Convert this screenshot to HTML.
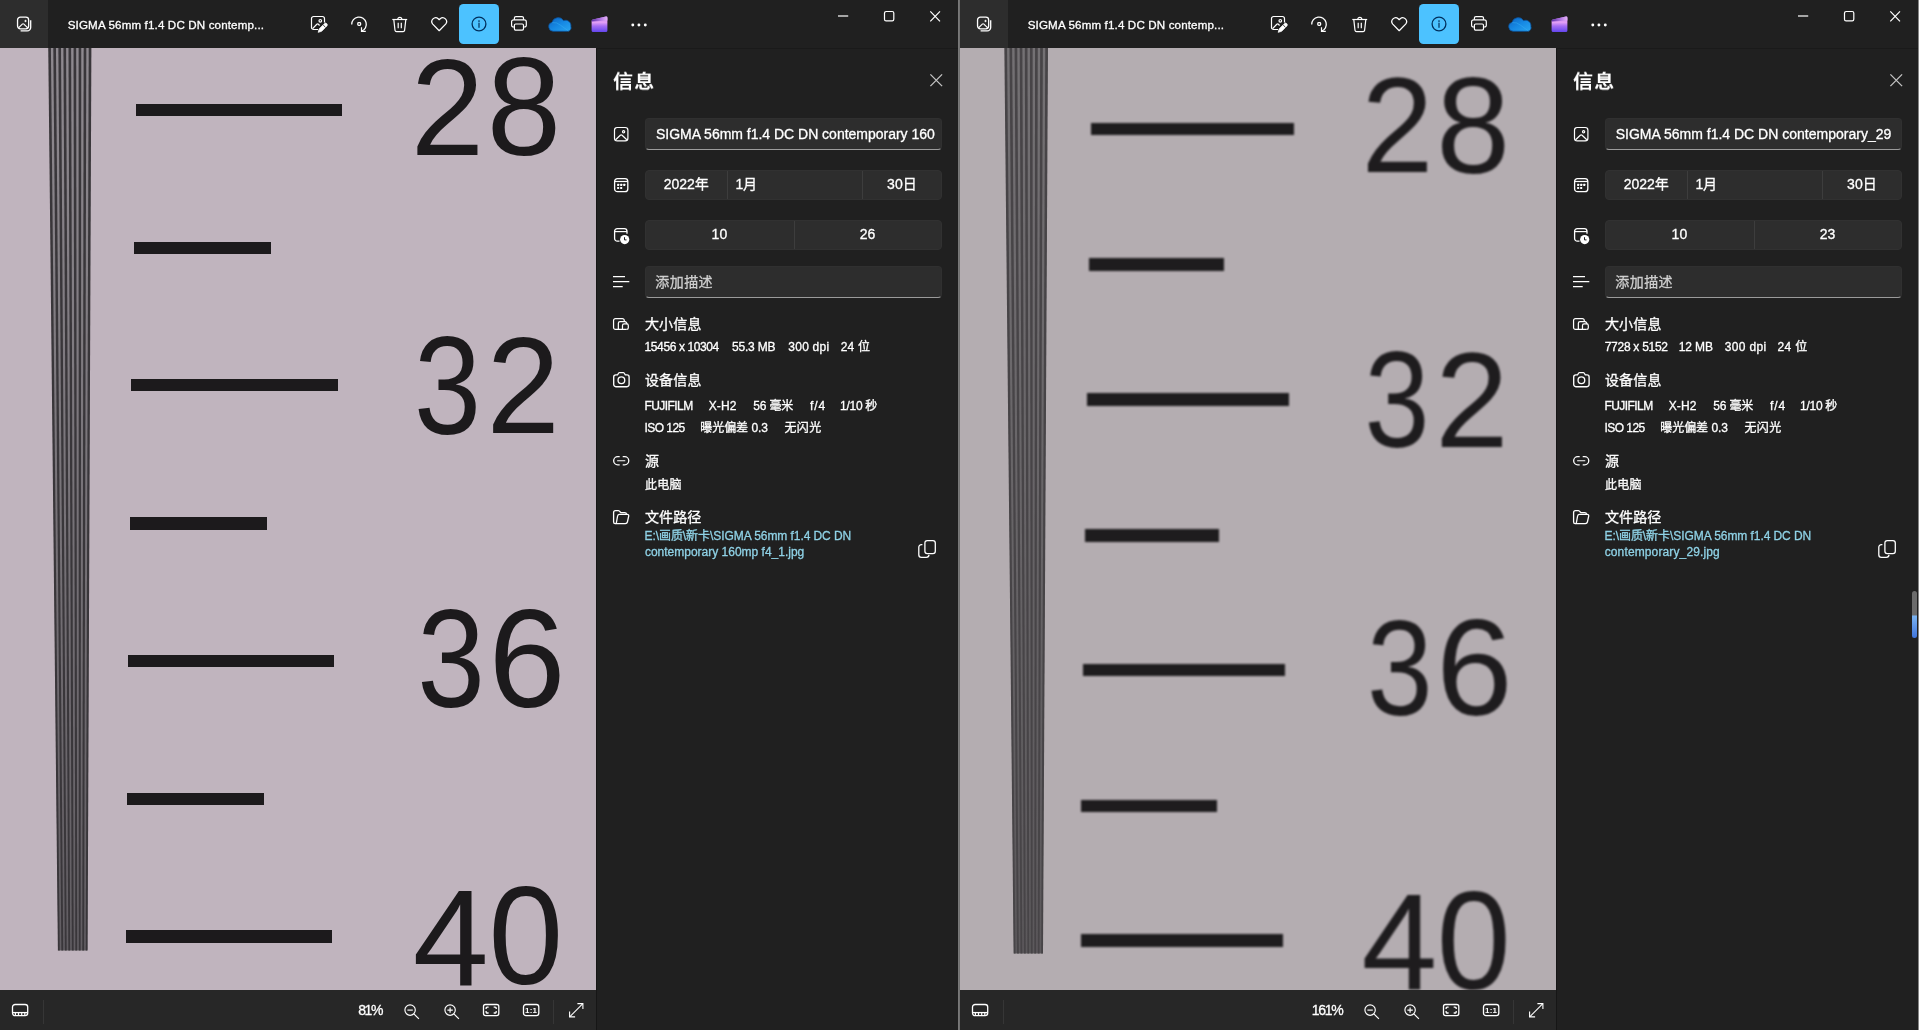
<!DOCTYPE html><html lang="zh-CN"><head><meta charset="utf-8"><title>照片</title><style>
*{box-sizing:border-box}
html,body{margin:0;padding:0}
body{width:1919px;height:1030px;overflow:hidden;background:#202020;position:relative;font-family:"Liberation Sans","Noto Sans CJK SC",sans-serif;color:#fff}
.w{position:absolute;top:0;height:1030px;overflow:hidden;background:#202020}
.ic{position:absolute;overflow:visible;fill:none;stroke:#fff;stroke-width:1.2}
.t{position:absolute;white-space:pre;-webkit-text-stroke:0.3px}
.tx{position:absolute;left:0;top:0;width:0;height:0;will-change:transform}
.tb{position:absolute;left:0;top:0;height:48px;background:#202020}
.appb{position:absolute;left:0;top:0;width:48px;height:48px;background:#2d2d2d}
.act{position:absolute;left:459px;top:4px;width:40px;height:40px;border-radius:4.5px;background:#4cc2ff}
.ph{position:absolute;left:0;top:48px;width:596px;height:942px;overflow:hidden}
.ln{position:absolute}
.dg{position:absolute;white-space:pre;font-family:"Liberation Sans",sans-serif;line-height:1;transform-origin:0 0}
.bb{position:absolute;left:0;top:990px;width:596px;height:40px;background:#272727}
.vd{position:absolute;top:1000px;width:1px;height:24px;background:#363636}
.pn{position:absolute;left:596px;top:48px;height:982px;background:#202020;border-left:1px solid #161616;border-top:1.5px solid #1a1a1a}
.inp{position:absolute;left:645px;width:296.5px;background:#2d2d2d;border-radius:4px;border:1px solid #303030;border-bottom:1.2px solid #9b9b9b}
.box{position:absolute;left:645px;width:296.5px;height:30px;background:#2d2d2d;border-radius:4px;border:1px solid #313131}
.box i{position:absolute;top:0;width:1px;height:28px;background:#3d3d3d}
</style></head><body><svg width="0" height="0" style="position:absolute"><defs><linearGradient id="cg" x1="0" y1="0" x2="1" y2="1"><stop offset="0" stop-color="#0d62c0"/><stop offset="0.5" stop-color="#1689e4"/><stop offset="1" stop-color="#2aa5f0"/></linearGradient><linearGradient id="pg" x1="0" y1="0" x2="0" y2="1"><stop offset="0" stop-color="#b874ec"/><stop offset="0.38" stop-color="#e3a0f6"/><stop offset="0.62" stop-color="#a66ef4"/><stop offset="1" stop-color="#6446ee"/></linearGradient><linearGradient id="pg2" x1="0" y1="0" x2="1" y2="0"><stop offset="0" stop-color="#5b2fa6"/><stop offset="0.6" stop-color="#b57ae6"/><stop offset="1" stop-color="#e6b4f6"/></linearGradient></defs></svg><div class="w" style="left:0;width:958px"><div class="ph" style="background:#c0b4be"><svg class="ic" style="left:0;top:0;filter:blur(0.45px)" width="140" height="942" viewBox="0 0 140 942"><defs><linearGradient id="bg482" x1="0" y1="0" x2="0" y2="1"><stop offset="0" stop-color="#8f8a90"/><stop offset="1" stop-color="#615d62"/></linearGradient></defs><polygon points="48.800000000000004,-4 90.80000000000001,-4 87.19999999999999,902.5 58.3,902.5" fill="url(#bg482)" stroke="none"/><polygon points="48.20,-4 50.87,-4 59.73,902.5 57.90,902.5" fill="#39363a" stroke="none"/><polygon points="53.27,-4 55.93,-4 63.22,902.5 61.38,902.5" fill="#39363a" stroke="none"/><polygon points="58.33,-4 61.00,-4 66.70,902.5 64.87,902.5" fill="#39363a" stroke="none"/><polygon points="63.40,-4 66.07,-4 70.18,902.5 68.35,902.5" fill="#39363a" stroke="none"/><polygon points="68.47,-4 71.13,-4 73.67,902.5 71.83,902.5" fill="#39363a" stroke="none"/><polygon points="73.53,-4 76.20,-4 77.15,902.5 75.32,902.5" fill="#39363a" stroke="none"/><polygon points="78.60,-4 81.27,-4 80.63,902.5 78.80,902.5" fill="#39363a" stroke="none"/><polygon points="83.67,-4 86.33,-4 84.12,902.5 82.28,902.5" fill="#39363a" stroke="none"/><polygon points="88.73,-4 91.40,-4 87.60,902.5 85.77,902.5" fill="#39363a" stroke="none"/></svg><div class="ln" style="left:135.5px;top:55.8px;width:206.2px;height:12.4px;background:#1c1a1c;filter:blur(0.7px)"></div><div class="ln" style="left:133.5px;top:193.5px;width:137.5px;height:12.4px;background:#1c1a1c;filter:blur(0.7px)"></div><div class="ln" style="left:131.4px;top:331.0px;width:206.8px;height:12.4px;background:#1c1a1c;filter:blur(0.7px)"></div><div class="ln" style="left:130px;top:469.2px;width:136.9px;height:12.4px;background:#1c1a1c;filter:blur(0.7px)"></div><div class="ln" style="left:128.2px;top:606.8px;width:206.2px;height:12.4px;background:#1c1a1c;filter:blur(0.7px)"></div><div class="ln" style="left:127px;top:744.5px;width:137.0px;height:12.4px;background:#1c1a1c;filter:blur(0.7px)"></div><div class="ln" style="left:125.7px;top:882.3px;width:206.3px;height:12.4px;background:#1c1a1c;filter:blur(0.7px)"></div><svg class="ic" style="left:0;top:0;filter:blur(0.7px);fill:#1c1a1c;stroke:none" width="596" height="942" viewBox="0 48 596 942" font-family="Liberation Sans, sans-serif" font-size="134" fill="#1c1a1c" stroke="none"><text transform="matrix(0.9836 0 0 1.0214 410.86 154.60)">2</text><text transform="matrix(0.9984 0 0 1.0332 486.86 155.11)">8</text><text transform="matrix(0.8992 0 0 1.0332 413.88 433.81)">3</text><text transform="matrix(0.9836 0 0 1.0289 486.56 433.40)">2</text><text transform="matrix(0.9087 0 0 1.0332 417.33 707.41)">3</text><text transform="matrix(1.0339 0 0 1.0385 488.52 706.80)">6</text><text transform="matrix(1.0193 0 0 1.0233 412.64 984.50)">4</text><text transform="matrix(1.0016 0 0 1.0332 488.54 984.41)">0</text></svg></div><div class="tb" style="width:958px"></div><div class="appb"></div><svg class="ic" style="left:17px;top:17px" width="15" height="15" viewBox="0 0 15 15"><rect x="0.55" y="0.2" width="11.1" height="11.6" rx="2.8" stroke-width="1.3"/><path d="M3.6 13.9H10.2A3.5 3.5 0 0 0 13.7 10.4V3.2" stroke-width="1.3"/><path d="M1.5 10.9L5.3 7.1Q6.1 6.4 6.9 7.1L10.7 10.9" stroke-width="1.2"/><path d="M8.5 2.4L9.1 3.4L10.1 4L9.1 4.6L8.5 5.6L7.9 4.6L6.9 4L7.9 3.4Z" fill="#fff" stroke="none"/></svg><svg class="ic" style="left:311px;top:16px" width="17" height="17" viewBox="0 0 17 17"><path d="M7 13.5H2.6A2.1 2.1 0 0 1 0.5 11.4V2.6A2.1 2.1 0 0 1 2.6 0.5H11.4A2.1 2.1 0 0 1 13.5 2.6V6.5"/><circle cx="9.3" cy="4.8" r="1.3"/><path d="M1.6 12.6L5.8 8.3Q6.6 7.6 7.4 8.3L8.6 9.5"/><path d="M7.2 16.3L8.2 12.9L13.4 7.7A1.6 1.6 0 0 1 15.8 10L10.6 15.3Z" fill="#fff" stroke="#fff" stroke-width="0.8" stroke-linejoin="round"/><path d="M12.2 9L14.4 11.2" stroke="#202020" stroke-width="0.9"/></svg><svg class="ic" style="left:350.5px;top:15.7px" width="17" height="17" viewBox="0 0 17 17"><path d="M0.7 8.6A7.3 7.3 0 1 1 10.6 15.2" stroke-width="1.3"/><path d="M10.5 11.3V15.4H14.8" stroke-width="1.2"/><rect x="6.8" y="6.6" width="2.8" height="2.8" rx="0.8" stroke-width="1.3"/></svg><svg class="ic" style="left:391.5px;top:15.6px" width="16" height="17" viewBox="0 0 16 17"><path d="M0.3 3.5H15.2"/><path d="M5.8 3.3A2 2 0 0 1 9.8 3.3"/><path d="M1.8 3.6L3 14.3A1.6 1.6 0 0 0 4.6 15.6H11A1.6 1.6 0 0 0 12.6 14.3L13.8 3.6"/><path d="M6.2 6.8V12.2M9.3 6.8V12.2"/></svg><svg class="ic" style="left:430.9px;top:16.6px" width="17" height="15" viewBox="0 0 17 15"><path d="M8.2 13.7L1.75 7.1A3.85 3.85 0 0 1 7.2 1.7L8.2 2.7L9.2 1.7A3.85 3.85 0 0 1 14.65 7.1Z" stroke-linejoin="round" stroke-width="1.25"/></svg><div class="act"></div><svg class="ic" style="left:470.5px;top:15.5px" width="16" height="16" viewBox="0 0 16 16"><circle cx="8" cy="8" r="6.9" stroke="#002f5c" stroke-width="1.3"/><circle cx="8" cy="5" r="0.85" fill="#002f5c" stroke="none"/><path d="M8 7.1V11.3" stroke="#002f5c" stroke-width="1.2" stroke-linecap="round"/></svg><svg class="ic" style="left:511px;top:16.4px" width="17" height="16" viewBox="0 0 17 16"><path d="M3.4 3.8V2.1A1.5 1.5 0 0 1 4.9 0.6H11A1.5 1.5 0 0 1 12.5 2.1V3.8" stroke-width="1.2"/><path d="M3.3 11H2.4A1.8 1.8 0 0 1 0.6 9.2V5.8A2 2 0 0 1 2.6 3.8H13.3A2 2 0 0 1 15.3 5.8V9.2A1.8 1.8 0 0 1 13.5 11H12.6" stroke-width="1.2"/><rect x="3.4" y="8" width="9.1" height="6.1" rx="1.3" stroke-width="1.2"/></svg><svg class="ic" style="left:547.5px;top:16px" width="24" height="16" viewBox="0 0 24 16"><path d="M5.2 15.3A4.6 4.6 0 0 1 4 6.3A6.4 6.4 0 0 1 15.6 4.6A5.4 5.4 0 0 1 22.9 10.4A3.6 3.6 0 0 1 19.6 15.3Z" fill="url(#cg)" stroke="#0b4f96" stroke-width="0.8"/><path d="M4.3 6.6Q9 6 12.5 9.2L20.5 15" stroke="#37b0f4" stroke-width="0.8" opacity="0.6"/></svg><svg class="ic" style="left:590.6px;top:15.7px" width="17" height="17" viewBox="0 0 17 17"><path d="M0.6 5.2Q0.6 3.9 1.9 3.6L14.9 0.5Q16.4 0.2 16.4 1.7V14.4Q16.4 15.9 14.9 15.9H2.1Q0.6 15.9 0.6 14.4Z" fill="url(#pg)" stroke="none"/><path d="M0.6 5.6L16.4 4.4V1.7Q16.4 0.2 14.9 0.5L1.9 3.6Q0.6 3.9 0.6 5.2Z" fill="url(#pg2)" stroke="none"/></svg><svg class="ic" style="left:631.2px;top:22.6px" width="16" height="4" viewBox="0 0 16 4"><circle cx="1.8" cy="2" r="1.45" fill="#fff" stroke="none"/><circle cx="7.9" cy="2" r="1.45" fill="#fff" stroke="none"/><circle cx="14.3" cy="2" r="1.45" fill="#fff" stroke="none"/></svg><svg class="ic" style="left:837.9px;top:14.5px" width="11" height="2" viewBox="0 0 11 2"><path d="M0 1H10.2"/></svg><svg class="ic" style="left:883.9px;top:10.9px" width="11" height="11" viewBox="0 0 11 11"><rect x="0.5" y="0.5" width="9.3" height="9.3" rx="1.6"/></svg><svg class="ic" style="left:929.9px;top:10.6px" width="11" height="11" viewBox="0 0 11 11"><path d="M0.3 0.3L10 10.3M10 0.3L0.3 10.3"/></svg><div class="bb"></div><div class="vd" style="left:42.5px"></div><div class="vd" style="left:553.3px"></div><svg class="ic" style="left:11.9px;top:1004px" width="17" height="13" viewBox="0 0 17 13"><rect x="0.5" y="0.5" width="15.2" height="11.2" rx="2.6" stroke-width="1.3"/><path d="M0.6 8.6H15.6" stroke-width="1.3"/><path d="M3.4 8.6V11.6M6.5 8.6V11.6M9.7 8.6V11.6M12.8 8.6V11.6" stroke-width="1.2"/></svg><svg class="ic" style="left:403.8px;top:1004px" width="16" height="16" viewBox="0 0 16 16"><circle cx="6.1" cy="6.1" r="5.2" stroke-width="1.15"/><path d="M3.4 6.1H8.8" stroke-width="1.15"/><path d="M9.9 9.9L14.9 14.9" stroke-width="1.15"/></svg><svg class="ic" style="left:443.9px;top:1004px" width="16" height="16" viewBox="0 0 16 16"><circle cx="6.1" cy="6.1" r="5.2" stroke-width="1.15"/><path d="M3.4 6.1H8.8M6.1 3.4V8.8" stroke-width="1.15"/><path d="M9.9 9.9L14.9 14.9" stroke-width="1.15"/></svg><svg class="ic" style="left:483px;top:1004px" width="17" height="13" viewBox="0 0 17 13"><rect x="0.5" y="0.5" width="15.3" height="11.1" rx="2" stroke-width="1.3"/><path d="M3.1 5V4.2A1.1 1.1 0 0 1 4.2 3.1H5.6M10.7 3.1H12.1A1.1 1.1 0 0 1 13.2 4.2V5M13.2 7.1V7.9A1.1 1.1 0 0 1 12.1 9H10.7M5.6 9H4.2A1.1 1.1 0 0 1 3.1 7.9V7.1" stroke-width="1.3"/></svg><svg class="ic" style="left:523.1px;top:1004px;will-change:transform" width="17" height="13" viewBox="0 0 17 13"><rect x="0.5" y="0.5" width="15.3" height="11.1" rx="2.4" stroke-width="1.3"/><text x="8.15" y="9.1" font-family="Liberation Sans, sans-serif" font-size="8" font-weight="700" fill="#fff" stroke="none" text-anchor="middle" letter-spacing="0.2">1:1</text></svg><svg class="ic" style="left:568.7px;top:1002.9px" width="15" height="15" viewBox="0 0 15 15"><path d="M0.9 13.6L13.6 0.9" stroke-width="1.1"/><path d="M8.4 0.6H13.9V6.1M0.6 8.4V13.9H6.1" stroke-width="1.1"/></svg><div class="pn" style="width:362px"></div><div class="inp" style="top:118px;height:32px"></div><div class="box" style="top:170px"><i style="left:81px"></i><i style="left:216px"></i></div><div class="box" style="top:220px"><i style="left:148px"></i></div><div class="inp" style="top:266px;height:32px"></div><svg class="ic" style="left:929.7px;top:73.5px" width="13" height="13" viewBox="0 0 13 13"><path d="M0.4 0.4L12.1 12.1M12.1 0.4L0.4 12.1" stroke="#c4c4c4" stroke-width="1.3"/></svg><svg class="ic" style="left:613.7px;top:126.8px" width="15" height="15" viewBox="0 0 15 15"><rect x="0.5" y="0.5" width="13.4" height="13.4" rx="2.7"/><path d="M1.6 12.8L6.3 8.2Q7.2 7.5 8.1 8.2L12.8 12.8"/><circle cx="9.6" cy="4.7" r="1.1"/></svg><svg class="ic" style="left:613.7px;top:177.7px" width="15" height="15" viewBox="0 0 15 15"><rect x="0.6" y="0.6" width="13.2" height="13.1" rx="2.8" stroke-width="1.3"/><path d="M0.6 3.5H13.8" stroke-width="1.2"/><g fill="#fff" stroke="none"><rect x="3.1" y="5.8" width="2.1" height="2.1" rx="0.4"/><rect x="6.15" y="5.8" width="2.1" height="2.1" rx="0.4"/><rect x="9.2" y="5.8" width="2.1" height="2.1" rx="0.4"/><rect x="3.1" y="8.9" width="2.1" height="2.1" rx="0.4"/><rect x="6.15" y="8.9" width="2.1" height="2.1" rx="0.4"/></g></svg><svg class="ic" style="left:613.7px;top:227.7px" width="16" height="17" viewBox="0 0 16 17"><path d="M5.5 13.2H3.3A2.7 2.7 0 0 1 0.6 10.5V3.3A2.7 2.7 0 0 1 3.3 0.6H10.3A2.7 2.7 0 0 1 13 3.3V5.8" stroke-width="1.3"/><path d="M0.6 3.6H13" stroke-width="1.2"/><circle cx="10.7" cy="11.6" r="4.6" fill="#fff" stroke="none"/><path d="M10.5 9.2V11.9H12.5" stroke="#202020" stroke-width="1"/></svg><svg class="ic" style="left:612.7px;top:275.9px" width="17" height="12" viewBox="0 0 17 12"><path d="M0 0.6H12M0 5.6H16.3M0 10.6H9.7" stroke-width="1.1"/></svg><svg class="ic" style="left:612.7px;top:318.2px" width="15.98" height="12.22" viewBox="0 0 17 13"><path d="M12 3.6V2.6A2 2 0 0 0 10 0.6H2.6A2 2 0 0 0 0.6 2.6V10.2A2 2 0 0 0 2.6 12.2H14.6" stroke-width="1.3"/><path d="M5.7 12.2V5.7A1.8 1.8 0 0 1 7.5 3.9H12.6Q13.7 3.9 14.3 4.9L15.1 6.3" stroke-width="1.3"/><path d="M10.1 12.2V8A1.8 1.8 0 0 1 11.9 6.2H14.6A1.7 1.7 0 0 1 16.3 7.9V10.5A1.7 1.7 0 0 1 14.6 12.2" stroke-width="1.3"/></svg><svg class="ic" style="left:612.6px;top:371.9px" width="17" height="16" viewBox="0 0 17 16"><path d="M2.8 2.8H4.5L5.7 1Q6 0.55 6.5 0.55H10.3Q10.8 0.55 11.1 1L12.3 2.8H14A2.1 2.1 0 0 1 16.1 4.9V12.6A2.1 2.1 0 0 1 14 14.7H2.8A2.1 2.1 0 0 1 0.7 12.6V4.9A2.1 2.1 0 0 1 2.8 2.8Z" stroke-width="1.35"/><circle cx="8.4" cy="8.2" r="3.35" stroke-width="1.35"/></svg><svg class="ic" style="left:612.6px;top:455.75px" width="17" height="11" viewBox="0 0 17 11"><path d="M6.7 0.65H4.75A4.1 4.1 0 0 0 4.75 8.85H6.7" stroke-width="1.3"/><path d="M9.7 0.65H11.65A4.1 4.1 0 0 1 11.65 8.85H9.7" stroke-width="1.3"/><path d="M4.6 4.75H11.8" stroke-width="1.2" stroke-linecap="round"/></svg><svg class="ic" style="left:612.6px;top:509.7px" width="17" height="15" viewBox="0 0 17 15"><path d="M2.2 13.6A1.7 1.7 0 0 1 0.6 11.9V2.5A1.9 1.9 0 0 1 2.5 0.6H5.2Q5.9 0.6 6.4 1.1L7.5 2.2Q7.9 2.6 8.5 2.6H11.7A1.9 1.9 0 0 1 13.6 4.3" stroke-width="1.3"/><path d="M2.2 13.6Q3.1 13.6 3.4 12.6L4.6 6Q4.9 4.4 6.5 4.4H14.3A1.4 1.4 0 0 1 15.7 6.2L14.4 12Q14 13.6 12.3 13.6Z" stroke-width="1.3" stroke-linejoin="round"/></svg><svg class="ic" style="left:917.7px;top:539.6px" width="19" height="19" viewBox="0 0 19 19"><rect x="6.9" y="0.7" width="10.4" height="12.9" rx="2.4" stroke-width="1.3"/><path d="M4.4 4.6H3.4A2.6 2.6 0 0 0 0.8 7.2V14.7A2.6 2.6 0 0 0 3.4 17.3H8.4A2.6 2.6 0 0 0 11 14.9" stroke-width="1.3"/></svg><div class="tx"><div class="t" style="left:67.7px;top:15.4px;font-size:11.6px;line-height:20px;letter-spacing:0.14px">SIGMA 56mm f1.4 DC DN contemp...</div><div class="t" style="left:613.02px;top:68.4px;font-size:20px;line-height:28px;font-weight:700;letter-spacing:1.23px;-webkit-text-stroke:0px;transform:scaleY(0.94)">信息</div><div class="t" style="left:655.98px;top:124.0px;font-size:14px;line-height:20px;letter-spacing:-0.015px">SIGMA 56mm f1.4 DC DN contemporary 160</div><div class="t" style="left:663.67px;top:173.9px;font-size:14px;line-height:20px;letter-spacing:0.003px">2022年</div><div class="t" style="left:735.6px;top:173.9px;font-size:14px;line-height:20px;letter-spacing:-0.486px">1月</div><div class="t" style="left:887.1px;top:173.9px;font-size:14px;line-height:20px;letter-spacing:0.089px">30日</div><div class="t" style="left:659.4px;width:120px;text-align:center;top:224.4px;font-size:14px;line-height:20px">10</div><div class="t" style="left:807.6px;width:120px;text-align:center;top:224.4px;font-size:14px;line-height:20px">26</div><div class="t" style="left:655.3px;top:272.0px;font-size:14px;line-height:20px;color:#cfcfcf;letter-spacing:0.433px">添加描述</div><div class="t" style="left:644.9px;top:314.0px;font-size:14px;line-height:20px;letter-spacing:0.217px">大小信息</div><div class="t" style="left:644.52px;top:337.0px;font-size:12px;line-height:20px;letter-spacing:-0.386px">15456 x 10304</div><div class="t" style="left:731.92px;top:337.0px;font-size:12px;line-height:20px;letter-spacing:-0.163px">55.3 MB</div><div class="t" style="left:788.33px;top:337.0px;font-size:12px;line-height:20px;letter-spacing:0.232px">300 dpi</div><div class="t" style="left:840.7px;top:337.0px;font-size:12px;line-height:20px;letter-spacing:0.206px">24 位</div><div class="t" style="left:644.9px;top:370.0px;font-size:14px;line-height:20px;letter-spacing:0.217px">设备信息</div><div class="t" style="left:644.52px;top:395.8px;font-size:12px;line-height:20px;letter-spacing:-0.573px">FUJIFILM</div><div class="t" style="left:708.65px;top:395.8px;font-size:12px;line-height:20px;letter-spacing:0.12px">X-H2</div><div class="t" style="left:753.23px;top:395.8px;font-size:12px;line-height:20px;letter-spacing:-0.134px">56 毫米</div><div class="t" style="left:809.88px;top:395.8px;font-size:12px;line-height:20px;letter-spacing:1.039px">f/4</div><div class="t" style="left:840.12px;top:395.8px;font-size:12px;line-height:20px;letter-spacing:-0.302px">1/10 秒</div><div class="t" style="left:644.4px;top:417.7px;font-size:12px;line-height:20px;letter-spacing:-0.534px">ISO 125</div><div class="t" style="left:700.23px;top:417.7px;font-size:12px;line-height:20px;letter-spacing:-0.032px">曝光偏差 0.3</div><div class="t" style="left:784.42px;top:417.7px;font-size:12px;line-height:20px;letter-spacing:0.428px">无闪光</div><div class="t" style="left:644.9px;top:451.0px;font-size:14px;line-height:20px">源</div><div class="t" style="left:644.9px;top:474.6px;font-size:12px;line-height:20px;letter-spacing:0.363px">此电脑</div><div class="t" style="left:644.9px;top:507.4px;font-size:14px;line-height:20px;letter-spacing:0.133px">文件路径</div><div class="t" style="left:644.52px;top:526.2px;font-size:12px;line-height:20px;color:#8fd2e6;letter-spacing:-0.068px">E:\画质\新卡\SIGMA 56mm f1.4 DC DN</div><div class="t" style="left:644.9px;top:542.2px;font-size:12px;line-height:20px;color:#8fd2e6;letter-spacing:-0.002px">contemporary 160mp f4_1.jpg</div><div class="t" style="left:358.3px;top:1000.2px;font-size:14px;line-height:20px;letter-spacing:-1.486px">81%</div></div></div><div style="position:absolute;left:958px;top:0;width:2px;height:1030px;background:linear-gradient(90deg,#7c7c7c,#6c6c6c)"></div><div class="w" style="left:960px;width:959px"><div class="ph" style="background:#b4adb1"><svg class="ic" style="left:0;top:0;filter:blur(0.7px)" width="140" height="942" viewBox="0 0 140 942"><defs><linearGradient id="bg443" x1="0" y1="0" x2="0" y2="1"><stop offset="0" stop-color="#747174"/><stop offset="1" stop-color="#5c595c"/></linearGradient></defs><polygon points="44.9,-4 87.4,-4 82.6,905.4 54.0,905.4" fill="url(#bg443)" stroke="none"/><polygon points="44.30,-4 47.00,-4 55.42,905.4 53.60,905.4" fill="#474447" stroke="none"/><polygon points="49.43,-4 52.12,-4 58.86,905.4 57.05,905.4" fill="#474447" stroke="none"/><polygon points="54.55,-4 57.25,-4 62.31,905.4 60.50,905.4" fill="#474447" stroke="none"/><polygon points="59.68,-4 62.37,-4 65.76,905.4 63.94,905.4" fill="#474447" stroke="none"/><polygon points="64.80,-4 67.50,-4 69.21,905.4 67.39,905.4" fill="#474447" stroke="none"/><polygon points="69.93,-4 72.62,-4 72.66,905.4 70.84,905.4" fill="#474447" stroke="none"/><polygon points="75.05,-4 77.75,-4 76.10,905.4 74.29,905.4" fill="#474447" stroke="none"/><polygon points="80.18,-4 82.87,-4 79.55,905.4 77.74,905.4" fill="#474447" stroke="none"/><polygon points="85.30,-4 88.00,-4 83.00,905.4 81.18,905.4" fill="#474447" stroke="none"/></svg><div class="ln" style="left:131.2px;top:74.5px;width:202.6px;height:12.6px;background:#1e1c1e;filter:blur(1.1px)"></div><div class="ln" style="left:129px;top:210.2px;width:134.7px;height:12.6px;background:#1e1c1e;filter:blur(1.1px)"></div><div class="ln" style="left:126.8px;top:345.1px;width:202.4px;height:12.6px;background:#1e1c1e;filter:blur(1.1px)"></div><div class="ln" style="left:124.8px;top:481.0px;width:134.5px;height:12.6px;background:#1e1c1e;filter:blur(1.1px)"></div><div class="ln" style="left:123.3px;top:615.9px;width:201.8px;height:12.6px;background:#1e1c1e;filter:blur(1.1px)"></div><div class="ln" style="left:121.3px;top:751.7px;width:135.3px;height:12.6px;background:#1e1c1e;filter:blur(1.1px)"></div><div class="ln" style="left:120.5px;top:886.2px;width:202.4px;height:12.6px;background:#1e1c1e;filter:blur(1.1px)"></div><svg class="ic" style="left:0;top:0;filter:blur(1.1px);fill:#1e1c1e;stroke:none" width="596" height="942" viewBox="0 48 596 942" font-family="Liberation Sans, sans-serif" font-size="134" fill="#1e1c1e" stroke="none"><text transform="matrix(0.9639 0 0 1.0086 401.59 172.00)">2</text><text transform="matrix(0.9905 0 0 1.0206 476.30 172.52)">8</text><text transform="matrix(0.8724 0 0 1.0206 404.62 447.12)">3</text><text transform="matrix(0.9836 0 0 1.0150 475.36 446.60)">2</text><text transform="matrix(0.8803 0 0 1.0153 406.98 715.13)">3</text><text transform="matrix(1.0242 0 0 1.0206 476.29 714.52)">6</text><text transform="matrix(1.0178 0 0 1.0233 401.55 989.00)">4</text><text transform="matrix(0.9922 0 0 1.0343 476.79 988.91)">0</text></svg></div><div class="tb" style="width:959px"></div><div class="appb"></div><svg class="ic" style="left:17px;top:17px" width="15" height="15" viewBox="0 0 15 15"><rect x="0.55" y="0.2" width="11.1" height="11.6" rx="2.8" stroke-width="1.3"/><path d="M3.6 13.9H10.2A3.5 3.5 0 0 0 13.7 10.4V3.2" stroke-width="1.3"/><path d="M1.5 10.9L5.3 7.1Q6.1 6.4 6.9 7.1L10.7 10.9" stroke-width="1.2"/><path d="M8.5 2.4L9.1 3.4L10.1 4L9.1 4.6L8.5 5.6L7.9 4.6L6.9 4L7.9 3.4Z" fill="#fff" stroke="none"/></svg><svg class="ic" style="left:311px;top:16px" width="17" height="17" viewBox="0 0 17 17"><path d="M7 13.5H2.6A2.1 2.1 0 0 1 0.5 11.4V2.6A2.1 2.1 0 0 1 2.6 0.5H11.4A2.1 2.1 0 0 1 13.5 2.6V6.5"/><circle cx="9.3" cy="4.8" r="1.3"/><path d="M1.6 12.6L5.8 8.3Q6.6 7.6 7.4 8.3L8.6 9.5"/><path d="M7.2 16.3L8.2 12.9L13.4 7.7A1.6 1.6 0 0 1 15.8 10L10.6 15.3Z" fill="#fff" stroke="#fff" stroke-width="0.8" stroke-linejoin="round"/><path d="M12.2 9L14.4 11.2" stroke="#202020" stroke-width="0.9"/></svg><svg class="ic" style="left:350.5px;top:15.7px" width="17" height="17" viewBox="0 0 17 17"><path d="M0.7 8.6A7.3 7.3 0 1 1 10.6 15.2" stroke-width="1.3"/><path d="M10.5 11.3V15.4H14.8" stroke-width="1.2"/><rect x="6.8" y="6.6" width="2.8" height="2.8" rx="0.8" stroke-width="1.3"/></svg><svg class="ic" style="left:391.5px;top:15.6px" width="16" height="17" viewBox="0 0 16 17"><path d="M0.3 3.5H15.2"/><path d="M5.8 3.3A2 2 0 0 1 9.8 3.3"/><path d="M1.8 3.6L3 14.3A1.6 1.6 0 0 0 4.6 15.6H11A1.6 1.6 0 0 0 12.6 14.3L13.8 3.6"/><path d="M6.2 6.8V12.2M9.3 6.8V12.2"/></svg><svg class="ic" style="left:430.9px;top:16.6px" width="17" height="15" viewBox="0 0 17 15"><path d="M8.2 13.7L1.75 7.1A3.85 3.85 0 0 1 7.2 1.7L8.2 2.7L9.2 1.7A3.85 3.85 0 0 1 14.65 7.1Z" stroke-linejoin="round" stroke-width="1.25"/></svg><div class="act"></div><svg class="ic" style="left:470.5px;top:15.5px" width="16" height="16" viewBox="0 0 16 16"><circle cx="8" cy="8" r="6.9" stroke="#002f5c" stroke-width="1.3"/><circle cx="8" cy="5" r="0.85" fill="#002f5c" stroke="none"/><path d="M8 7.1V11.3" stroke="#002f5c" stroke-width="1.2" stroke-linecap="round"/></svg><svg class="ic" style="left:511px;top:16.4px" width="17" height="16" viewBox="0 0 17 16"><path d="M3.4 3.8V2.1A1.5 1.5 0 0 1 4.9 0.6H11A1.5 1.5 0 0 1 12.5 2.1V3.8" stroke-width="1.2"/><path d="M3.3 11H2.4A1.8 1.8 0 0 1 0.6 9.2V5.8A2 2 0 0 1 2.6 3.8H13.3A2 2 0 0 1 15.3 5.8V9.2A1.8 1.8 0 0 1 13.5 11H12.6" stroke-width="1.2"/><rect x="3.4" y="8" width="9.1" height="6.1" rx="1.3" stroke-width="1.2"/></svg><svg class="ic" style="left:547.5px;top:16px" width="24" height="16" viewBox="0 0 24 16"><path d="M5.2 15.3A4.6 4.6 0 0 1 4 6.3A6.4 6.4 0 0 1 15.6 4.6A5.4 5.4 0 0 1 22.9 10.4A3.6 3.6 0 0 1 19.6 15.3Z" fill="url(#cg)" stroke="#0b4f96" stroke-width="0.8"/><path d="M4.3 6.6Q9 6 12.5 9.2L20.5 15" stroke="#37b0f4" stroke-width="0.8" opacity="0.6"/></svg><svg class="ic" style="left:590.6px;top:15.7px" width="17" height="17" viewBox="0 0 17 17"><path d="M0.6 5.2Q0.6 3.9 1.9 3.6L14.9 0.5Q16.4 0.2 16.4 1.7V14.4Q16.4 15.9 14.9 15.9H2.1Q0.6 15.9 0.6 14.4Z" fill="url(#pg)" stroke="none"/><path d="M0.6 5.6L16.4 4.4V1.7Q16.4 0.2 14.9 0.5L1.9 3.6Q0.6 3.9 0.6 5.2Z" fill="url(#pg2)" stroke="none"/></svg><svg class="ic" style="left:631.2px;top:22.6px" width="16" height="4" viewBox="0 0 16 4"><circle cx="1.8" cy="2" r="1.45" fill="#fff" stroke="none"/><circle cx="7.9" cy="2" r="1.45" fill="#fff" stroke="none"/><circle cx="14.3" cy="2" r="1.45" fill="#fff" stroke="none"/></svg><svg class="ic" style="left:837.9px;top:14.5px" width="11" height="2" viewBox="0 0 11 2"><path d="M0 1H10.2"/></svg><svg class="ic" style="left:883.9px;top:10.9px" width="11" height="11" viewBox="0 0 11 11"><rect x="0.5" y="0.5" width="9.3" height="9.3" rx="1.6"/></svg><svg class="ic" style="left:929.9px;top:10.6px" width="11" height="11" viewBox="0 0 11 11"><path d="M0.3 0.3L10 10.3M10 0.3L0.3 10.3"/></svg><div class="bb"></div><div class="vd" style="left:42.5px"></div><div class="vd" style="left:553.3px"></div><svg class="ic" style="left:11.9px;top:1004px" width="17" height="13" viewBox="0 0 17 13"><rect x="0.5" y="0.5" width="15.2" height="11.2" rx="2.6" stroke-width="1.3"/><path d="M0.6 8.6H15.6" stroke-width="1.3"/><path d="M3.4 8.6V11.6M6.5 8.6V11.6M9.7 8.6V11.6M12.8 8.6V11.6" stroke-width="1.2"/></svg><svg class="ic" style="left:403.8px;top:1004px" width="16" height="16" viewBox="0 0 16 16"><circle cx="6.1" cy="6.1" r="5.2" stroke-width="1.15"/><path d="M3.4 6.1H8.8" stroke-width="1.15"/><path d="M9.9 9.9L14.9 14.9" stroke-width="1.15"/></svg><svg class="ic" style="left:443.9px;top:1004px" width="16" height="16" viewBox="0 0 16 16"><circle cx="6.1" cy="6.1" r="5.2" stroke-width="1.15"/><path d="M3.4 6.1H8.8M6.1 3.4V8.8" stroke-width="1.15"/><path d="M9.9 9.9L14.9 14.9" stroke-width="1.15"/></svg><svg class="ic" style="left:483px;top:1004px" width="17" height="13" viewBox="0 0 17 13"><rect x="0.5" y="0.5" width="15.3" height="11.1" rx="2" stroke-width="1.3"/><path d="M3.1 5V4.2A1.1 1.1 0 0 1 4.2 3.1H5.6M10.7 3.1H12.1A1.1 1.1 0 0 1 13.2 4.2V5M13.2 7.1V7.9A1.1 1.1 0 0 1 12.1 9H10.7M5.6 9H4.2A1.1 1.1 0 0 1 3.1 7.9V7.1" stroke-width="1.3"/></svg><svg class="ic" style="left:523.1px;top:1004px;will-change:transform" width="17" height="13" viewBox="0 0 17 13"><rect x="0.5" y="0.5" width="15.3" height="11.1" rx="2.4" stroke-width="1.3"/><text x="8.15" y="9.1" font-family="Liberation Sans, sans-serif" font-size="8" font-weight="700" fill="#fff" stroke="none" text-anchor="middle" letter-spacing="0.2">1:1</text></svg><svg class="ic" style="left:568.7px;top:1002.9px" width="15" height="15" viewBox="0 0 15 15"><path d="M0.9 13.6L13.6 0.9" stroke-width="1.1"/><path d="M8.4 0.6H13.9V6.1M0.6 8.4V13.9H6.1" stroke-width="1.1"/></svg><div class="pn" style="width:363px"></div><div class="inp" style="top:118px;height:32px"></div><div class="box" style="top:170px"><i style="left:81px"></i><i style="left:216px"></i></div><div class="box" style="top:220px"><i style="left:148px"></i></div><div class="inp" style="top:266px;height:32px"></div><svg class="ic" style="left:929.7px;top:73.5px" width="13" height="13" viewBox="0 0 13 13"><path d="M0.4 0.4L12.1 12.1M12.1 0.4L0.4 12.1" stroke="#c4c4c4" stroke-width="1.3"/></svg><svg class="ic" style="left:613.7px;top:126.8px" width="15" height="15" viewBox="0 0 15 15"><rect x="0.5" y="0.5" width="13.4" height="13.4" rx="2.7"/><path d="M1.6 12.8L6.3 8.2Q7.2 7.5 8.1 8.2L12.8 12.8"/><circle cx="9.6" cy="4.7" r="1.1"/></svg><svg class="ic" style="left:613.7px;top:177.7px" width="15" height="15" viewBox="0 0 15 15"><rect x="0.6" y="0.6" width="13.2" height="13.1" rx="2.8" stroke-width="1.3"/><path d="M0.6 3.5H13.8" stroke-width="1.2"/><g fill="#fff" stroke="none"><rect x="3.1" y="5.8" width="2.1" height="2.1" rx="0.4"/><rect x="6.15" y="5.8" width="2.1" height="2.1" rx="0.4"/><rect x="9.2" y="5.8" width="2.1" height="2.1" rx="0.4"/><rect x="3.1" y="8.9" width="2.1" height="2.1" rx="0.4"/><rect x="6.15" y="8.9" width="2.1" height="2.1" rx="0.4"/></g></svg><svg class="ic" style="left:613.7px;top:227.7px" width="16" height="17" viewBox="0 0 16 17"><path d="M5.5 13.2H3.3A2.7 2.7 0 0 1 0.6 10.5V3.3A2.7 2.7 0 0 1 3.3 0.6H10.3A2.7 2.7 0 0 1 13 3.3V5.8" stroke-width="1.3"/><path d="M0.6 3.6H13" stroke-width="1.2"/><circle cx="10.7" cy="11.6" r="4.6" fill="#fff" stroke="none"/><path d="M10.5 9.2V11.9H12.5" stroke="#202020" stroke-width="1"/></svg><svg class="ic" style="left:612.7px;top:275.9px" width="17" height="12" viewBox="0 0 17 12"><path d="M0 0.6H12M0 5.6H16.3M0 10.6H9.7" stroke-width="1.1"/></svg><svg class="ic" style="left:612.7px;top:318.2px" width="15.98" height="12.22" viewBox="0 0 17 13"><path d="M12 3.6V2.6A2 2 0 0 0 10 0.6H2.6A2 2 0 0 0 0.6 2.6V10.2A2 2 0 0 0 2.6 12.2H14.6" stroke-width="1.3"/><path d="M5.7 12.2V5.7A1.8 1.8 0 0 1 7.5 3.9H12.6Q13.7 3.9 14.3 4.9L15.1 6.3" stroke-width="1.3"/><path d="M10.1 12.2V8A1.8 1.8 0 0 1 11.9 6.2H14.6A1.7 1.7 0 0 1 16.3 7.9V10.5A1.7 1.7 0 0 1 14.6 12.2" stroke-width="1.3"/></svg><svg class="ic" style="left:612.6px;top:371.9px" width="17" height="16" viewBox="0 0 17 16"><path d="M2.8 2.8H4.5L5.7 1Q6 0.55 6.5 0.55H10.3Q10.8 0.55 11.1 1L12.3 2.8H14A2.1 2.1 0 0 1 16.1 4.9V12.6A2.1 2.1 0 0 1 14 14.7H2.8A2.1 2.1 0 0 1 0.7 12.6V4.9A2.1 2.1 0 0 1 2.8 2.8Z" stroke-width="1.35"/><circle cx="8.4" cy="8.2" r="3.35" stroke-width="1.35"/></svg><svg class="ic" style="left:612.6px;top:455.75px" width="17" height="11" viewBox="0 0 17 11"><path d="M6.7 0.65H4.75A4.1 4.1 0 0 0 4.75 8.85H6.7" stroke-width="1.3"/><path d="M9.7 0.65H11.65A4.1 4.1 0 0 1 11.65 8.85H9.7" stroke-width="1.3"/><path d="M4.6 4.75H11.8" stroke-width="1.2" stroke-linecap="round"/></svg><svg class="ic" style="left:612.6px;top:509.7px" width="17" height="15" viewBox="0 0 17 15"><path d="M2.2 13.6A1.7 1.7 0 0 1 0.6 11.9V2.5A1.9 1.9 0 0 1 2.5 0.6H5.2Q5.9 0.6 6.4 1.1L7.5 2.2Q7.9 2.6 8.5 2.6H11.7A1.9 1.9 0 0 1 13.6 4.3" stroke-width="1.3"/><path d="M2.2 13.6Q3.1 13.6 3.4 12.6L4.6 6Q4.9 4.4 6.5 4.4H14.3A1.4 1.4 0 0 1 15.7 6.2L14.4 12Q14 13.6 12.3 13.6Z" stroke-width="1.3" stroke-linejoin="round"/></svg><svg class="ic" style="left:917.7px;top:539.6px" width="19" height="19" viewBox="0 0 19 19"><rect x="6.9" y="0.7" width="10.4" height="12.9" rx="2.4" stroke-width="1.3"/><path d="M4.4 4.6H3.4A2.6 2.6 0 0 0 0.8 7.2V14.7A2.6 2.6 0 0 0 3.4 17.3H8.4A2.6 2.6 0 0 0 11 14.9" stroke-width="1.3"/></svg><div class="tx"><div class="t" style="left:67.7px;top:15.4px;font-size:11.6px;line-height:20px;letter-spacing:0.14px">SIGMA 56mm f1.4 DC DN contemp...</div><div class="t" style="left:613.02px;top:68.4px;font-size:20px;line-height:28px;font-weight:700;letter-spacing:1.23px;-webkit-text-stroke:0px;transform:scaleY(0.94)">信息</div><div class="t" style="left:655.67px;top:124.0px;font-size:14px;line-height:20px;letter-spacing:0.005px">SIGMA 56mm f1.4 DC DN contemporary_29</div><div class="t" style="left:663.67px;top:173.9px;font-size:14px;line-height:20px;letter-spacing:0.003px">2022年</div><div class="t" style="left:735.6px;top:173.9px;font-size:14px;line-height:20px;letter-spacing:-0.486px">1月</div><div class="t" style="left:887.1px;top:173.9px;font-size:14px;line-height:20px;letter-spacing:0.089px">30日</div><div class="t" style="left:659.4px;width:120px;text-align:center;top:224.4px;font-size:14px;line-height:20px">10</div><div class="t" style="left:807.6px;width:120px;text-align:center;top:224.4px;font-size:14px;line-height:20px">23</div><div class="t" style="left:655.3px;top:272.0px;font-size:14px;line-height:20px;color:#cfcfcf;letter-spacing:0.433px">添加描述</div><div class="t" style="left:644.9px;top:314.0px;font-size:14px;line-height:20px;letter-spacing:0.217px">大小信息</div><div class="t" style="left:644.7px;top:337.0px;font-size:12px;line-height:20px;letter-spacing:-0.271px">7728 x 5152</div><div class="t" style="left:718.83px;top:337.0px;font-size:12px;line-height:20px;letter-spacing:-0.146px">12 MB</div><div class="t" style="left:764.73px;top:337.0px;font-size:12px;line-height:20px;letter-spacing:0.349px">300 dpi</div><div class="t" style="left:817.6px;top:337.0px;font-size:12px;line-height:20px;letter-spacing:0.306px">24 位</div><div class="t" style="left:644.9px;top:370.0px;font-size:14px;line-height:20px;letter-spacing:0.217px">设备信息</div><div class="t" style="left:644.52px;top:395.8px;font-size:12px;line-height:20px;letter-spacing:-0.573px">FUJIFILM</div><div class="t" style="left:708.65px;top:395.8px;font-size:12px;line-height:20px;letter-spacing:0.12px">X-H2</div><div class="t" style="left:753.23px;top:395.8px;font-size:12px;line-height:20px;letter-spacing:-0.134px">56 毫米</div><div class="t" style="left:809.88px;top:395.8px;font-size:12px;line-height:20px;letter-spacing:1.039px">f/4</div><div class="t" style="left:840.12px;top:395.8px;font-size:12px;line-height:20px;letter-spacing:-0.302px">1/10 秒</div><div class="t" style="left:644.4px;top:417.7px;font-size:12px;line-height:20px;letter-spacing:-0.534px">ISO 125</div><div class="t" style="left:700.23px;top:417.7px;font-size:12px;line-height:20px;letter-spacing:-0.032px">曝光偏差 0.3</div><div class="t" style="left:784.42px;top:417.7px;font-size:12px;line-height:20px;letter-spacing:0.428px">无闪光</div><div class="t" style="left:644.9px;top:451.0px;font-size:14px;line-height:20px">源</div><div class="t" style="left:644.9px;top:474.6px;font-size:12px;line-height:20px;letter-spacing:0.363px">此电脑</div><div class="t" style="left:644.9px;top:507.4px;font-size:14px;line-height:20px;letter-spacing:0.133px">文件路径</div><div class="t" style="left:644.52px;top:526.2px;font-size:12px;line-height:20px;color:#8fd2e6;letter-spacing:-0.068px">E:\画质\新卡\SIGMA 56mm f1.4 DC DN</div><div class="t" style="left:644.7px;top:542.2px;font-size:12px;line-height:20px;color:#8fd2e6;letter-spacing:0.13px">contemporary_29.jpg</div><div class="t" style="left:351.8px;top:1000.2px;font-size:14px;line-height:20px;letter-spacing:-1.286px">161%</div></div><div style="position:absolute;left:952px;top:590.5px;width:5px;height:47.5px;border-radius:2.5px;background:linear-gradient(180deg,#6c6c6c 0,#6c6c6c 50%,#7ab2f0 54%,#3f74dc 100%)"></div><div style="position:absolute;left:958px;top:0;width:1px;height:1030px;background:#858585"></div></div></body></html>
